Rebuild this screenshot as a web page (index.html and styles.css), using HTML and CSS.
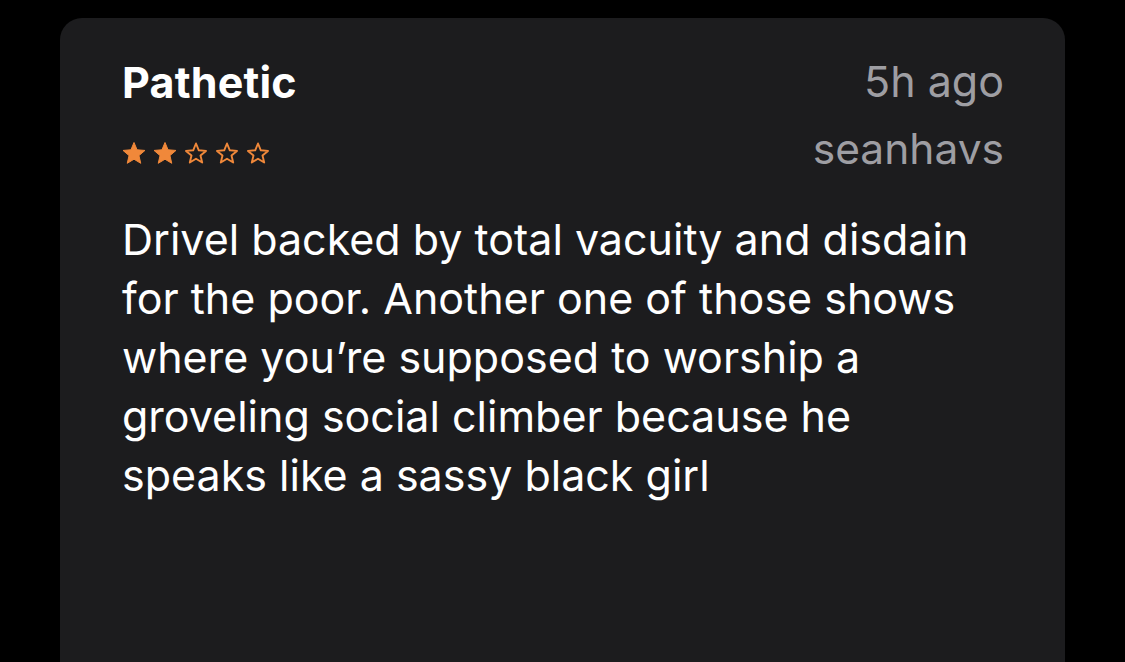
FILE: index.html
```html
<!DOCTYPE html>
<html>
<head>
<meta charset="utf-8">
<link rel="stylesheet" href="styles.css">
</head>
<body>
<div class="card">
  <div class="header">
    <div class="left">
      <div class="title">Pathetic</div>
      <div class="stars">
        <svg class="star" viewBox="0 0 24 22"><polygon class="full" points="12,0.5 15.06,7.79 22.94,8.45 16.95,13.61 18.76,21.3 12,17.2 5.24,21.3 7.05,13.61 1.06,8.45 8.94,7.79"/></svg>
        <svg class="star" viewBox="0 0 24 22"><polygon class="full" points="12,0.5 15.06,7.79 22.94,8.45 16.95,13.61 18.76,21.3 12,17.2 5.24,21.3 7.05,13.61 1.06,8.45 8.94,7.79"/></svg>
        <svg class="star" viewBox="0 0 24 22"><polygon class="empty" points="12,1.5 14.8,8.3 22,8.9 16.5,13.5 18.2,20.5 12,16.7 5.8,20.5 7.5,13.5 2,8.9 9.2,8.3"/></svg>
        <svg class="star" viewBox="0 0 24 22"><polygon class="empty" points="12,1.5 14.8,8.3 22,8.9 16.5,13.5 18.2,20.5 12,16.7 5.8,20.5 7.5,13.5 2,8.9 9.2,8.3"/></svg>
        <svg class="star" viewBox="0 0 24 22"><polygon class="empty" points="12,1.5 14.8,8.3 22,8.9 16.5,13.5 18.2,20.5 12,16.7 5.8,20.5 7.5,13.5 2,8.9 9.2,8.3"/></svg>
      </div>
    </div>
    <div class="right">
      <div class="date">5h ago</div>
      <div class="author">seanhavs</div>
    </div>
  </div>
  <p class="body">Drivel backed by total vacuity and disdain<br>for the poor. Another one of those shows<br>where you’re supposed to worship a<br>groveling social climber because he<br>speaks like a sassy black girl</p>
</div>
</body>
</html>
```
FILE: styles.css
```css
html, body {
  margin: 0;
  padding: 0;
  background: #000;
  width: 1125px;
  height: 662px;
  overflow: hidden;
}
body {
  font-family: Inter, "Noto Sans", sans-serif;
}
.card {
  margin: 18px 0 0 60px;
  width: 1005px;
  height: 720px;
  box-sizing: border-box;
  background: #1c1c1e;
  border-radius: 22px;
  padding: 38px 61px 0 62px;
}
.header {
  display: flex;
  justify-content: space-between;
  align-items: flex-start;
}
.title {
  color: #fff;
  font-size: 43px;
  font-weight: 700;
  line-height: 52px;
  letter-spacing: 0.2px;
}
.stars {
  display: flex;
  gap: 7px;
  margin-top: 34px;
}
.star {
  width: 24px;
  height: 22px;
  display: block;
  overflow: visible;
}
.star .full {
  fill: #f0883a;
  stroke: #f0883a;
  stroke-width: 1;
  stroke-linejoin: round;
}
.star .empty {
  fill: none;
  stroke: #f0883a;
  stroke-width: 1.9;
  stroke-linejoin: round;
}
.right {
  text-align: right;
  margin-top: -1px;
  color: #9e9ea3;
  font-size: 43px;
  line-height: 52px;
}
.author {
  margin-top: 16px;
  font-size: 42.5px;
}
.body {
  margin: 35px 0 0 0;
  color: #fff;
  font-size: 43px;
  line-height: 59px;
}
```
